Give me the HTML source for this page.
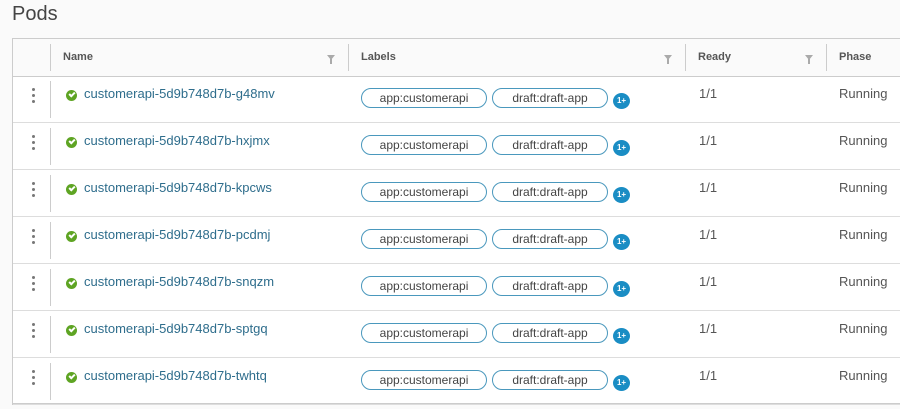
<!DOCTYPE html>
<html><head><style>
body{margin:0;width:900px;height:409px;background:#fafafa;font-family:"Liberation Sans",sans-serif;overflow:hidden;position:relative}
.t{position:absolute;left:12px;top:3px;font-size:20px;color:#444}
.tbl{position:absolute;left:12px;top:38px;width:900px;height:367px;border:1px solid #ccc;border-right:none;background:#fff;border-bottom:2px solid #ccc;box-sizing:border-box}
.hd{position:absolute;left:0;top:0;width:100%;height:37px;background:#fafafa;border-bottom:1px solid #ccc}
.hd span{position:absolute;top:12px;font-size:11px;font-weight:bold;color:#565656}
.vs{position:absolute;width:1px;background:#ccc}
.f{position:absolute;top:16px;width:0;height:0;border-left:4px solid transparent;border-right:4px solid transparent;border-top:5px solid #aaa}
.f:after{content:"";position:absolute;left:-1px;top:-1px;width:2px;height:5px;background:#aaa}
.row{position:absolute;left:0;width:100%;height:47px;border-bottom:1px solid #ddd;box-sizing:border-box}
.dots{position:absolute;left:19px;top:12px;width:3px}
.dots i{display:block;width:3px;height:3px;background:#777;border-radius:50%;margin-bottom:3px}
.ck{position:absolute;left:53px;top:14px;width:11px;height:11px;border-radius:50%;background:#5ea423}
.ck:after{content:"";position:absolute;left:3px;top:2px;width:4px;height:2px;border-left:2px solid #fff;border-bottom:2px solid #fff;transform:rotate(-45deg)}
.nm{position:absolute;left:71px;top:10px;font-size:13px;color:#2e6d8c}
.pill{position:absolute;top:12px;height:20px;border:1px solid #4a98bd;border-radius:10px;box-sizing:border-box;font-size:12px;color:#444;text-align:center;line-height:18px}
.b{position:absolute;left:600px;top:17px;width:17px;height:16px;border-radius:50%;background:#1a8dc4;color:#fff;font-size:8px;font-weight:bold;text-align:center;line-height:16px}
.c{position:absolute;top:10px;font-size:13px;color:#555}
</style></head><body>
<div class="t">Pods</div>
<div class="tbl">
<div class="hd">
<div class="vs" style="left:37px;top:5px;height:27px"></div>
<span style="left:50px">Name</span><div class="f" style="left:314px"></div>
<div class="vs" style="left:335px;top:5px;height:27px"></div>
<span style="left:348px">Labels</span><div class="f" style="left:651px"></div>
<div class="vs" style="left:672px;top:5px;height:27px"></div>
<span style="left:685px">Ready</span><div class="f" style="left:792px"></div>
<div class="vs" style="left:813px;top:5px;height:27px"></div>
<span style="left:826px">Phase</span>
</div>
<div id="rows"></div>
</div>
<script>
var n=["g48mv","hxjmx","kpcws","pcdmj","snqzm","sptgq","twhtq"],h="";
for(var i=0;i<7;i++){h+='<div class="row" style="top:'+(37+i*47)+'px"><div class="dots"><i></i><i></i><i></i></div><div class="vs" style="left:37px;top:5px;height:37px"></div><div class="ck"></div><div class="nm">customerapi-5d9b748d7b-'+n[i]+'</div><div class="pill" style="left:348px;width:126px">app:customerapi</div><div class="pill" style="left:479px;width:116px">draft:draft-app</div><div class="b">1+</div><div class="c" style="left:686px">1/1</div><div class="c" style="left:826px">Running</div></div>';}
document.getElementById("rows").innerHTML=h;
</script>
</body></html>
